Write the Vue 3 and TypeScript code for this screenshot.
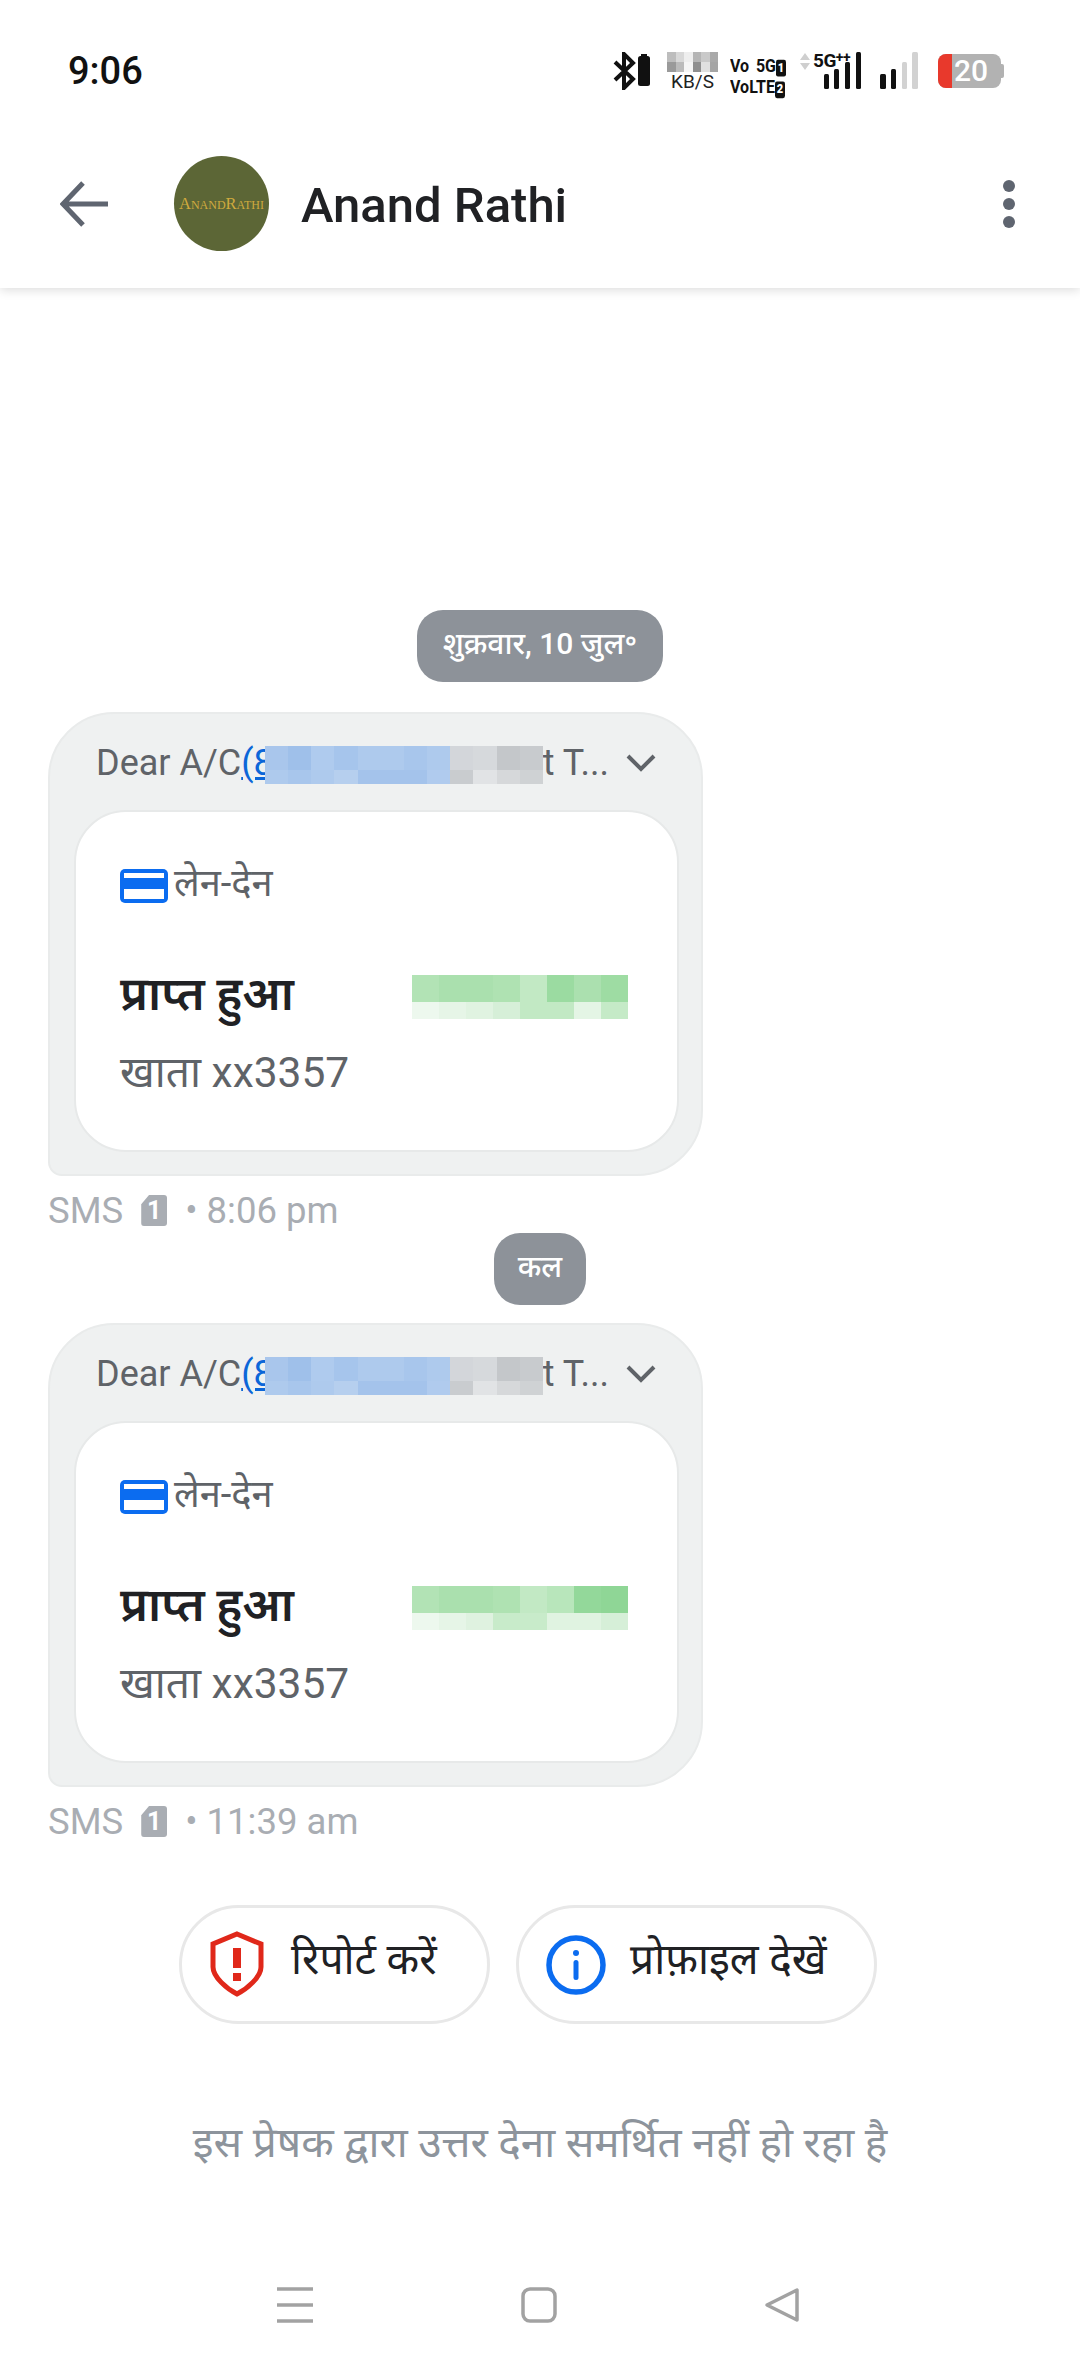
<script setup lang="ts">
interface Msg { time: string; blue: string[]; green: string[]; chip: string }
const topBlue = ['#a9c6ec','#9fc0ea','#afcbee','#a6c5ec','#aecaed','#aecaed','#a8c6ec','#aecaed','#d3d6da','#d6d9dc','#c4c7ca','#c8cbce']
const botBlue = ['#aecaed','#a8c6ec','#aecaed','#b6cfee','#a4c3eb','#a4c3eb','#a4c3eb','#b0cbee','#c9cccf','#e1e3e5','#d6d8da','#cfd2d4']
const green1 = ['#b2e3b5','#aae0ae','#aae0ae','#afe2b2','#c2e9c4','#9bdba1','#abe0af','#9edca3','#edf8ee','#e6f5e7','#e0f3e1','#d6efd8','#c2e9c4','#c2e9c4','#e4f5e5','#c5eac7']
const green2 = ['#b2e3b5','#aae0ae','#aae0ae','#afe2b2','#c2e9c4','#b8e6bb','#93d89a','#8fd696','#edf8ee','#e6f5e7','#dff2e0','#c8ebca','#c8ebca','#e0f3e1','#e0f3e1','#d6efd8']
const messages: Msg[] = [
  { chip: 'शुक्रवार, 10 जुल॰', time: '8:06 pm', blue: [...topBlue, ...botBlue], green: green1 },
  { chip: 'कल', time: '11:39 am', blue: [...topBlue, ...botBlue], green: green2 },
]
const speed = ['#bdbdbd','#d8d8d8','#eeeeee','#b5b5b5','#c9c9c9','#a9a9a9','#9a9a9a','#bbbbbb','#f5f5f5','#8f8f8f','#e0e0e0','#a5a5a5']
</script>

<template>
  <div class="page">
    <div class="status">
      <span class="clock">9:06</span>
      <div class="cluster">
        <svg class="bt" width="39" height="38" viewBox="0 0 39 38">
          <path d="M2 10 L20 27 L11 36 V2 L20 11 L2 28" fill="none" stroke="#111" stroke-width="4" stroke-linejoin="miter"/>
          <rect x="25" y="4" width="12" height="30" rx="2.5" fill="#111"/>
          <rect x="28" y="2" width="6" height="3" fill="#111"/>
        </svg>
        <div class="speed">
          <div class="speed-mosaic"><i v-for="(c, i) in speed" :key="i" :style="{ background: c }"></i></div>
          <span>KB/S</span>
        </div>
        <div class="volte">
          <div class="volte-row gap"><span>Vo</span><span>5G<b>1</b></span></div>
          <div class="volte-row"><span>VoLTE<b>2</b></span></div>
        </div>
        <div class="net">
          <svg width="10" height="17" viewBox="0 0 10 17"><path d="M5 0 L10 7 H0 Z M0 10 H10 L5 17 Z" fill="#cfcfcf"/></svg>
          <span class="fiveg">5G<sup>++</sup></span>
          <svg class="bars" width="38" height="37" viewBox="0 0 38 37">
            <rect x="1" y="22" width="5" height="15" rx="1.5" fill="#111"/>
            <rect x="11" y="17" width="5" height="20" rx="1.5" fill="#111"/>
            <rect x="22" y="10" width="5" height="27" rx="1.5" fill="#111"/>
            <rect x="33" y="0" width="5" height="37" rx="1.5" fill="#111"/>
          </svg>
        </div>
        <svg width="38" height="37" viewBox="0 0 38 37">
          <rect x="0" y="22" width="6" height="15" rx="1.5" fill="#111"/>
          <rect x="11" y="17" width="5" height="20" rx="1.5" fill="#111"/>
          <rect x="22" y="10" width="5" height="27" rx="1.5" fill="#d2d2d2"/>
          <rect x="32" y="0" width="6" height="37" rx="1.5" fill="#d2d2d2"/>
        </svg>
        <div class="battery">
          <div class="batt-body"><div class="batt-red"></div><span>20</span></div>
          <div class="batt-tip"></div>
        </div>
      </div>
    </div>

    <header class="topbar">
      <svg class="back" width="48" height="48" viewBox="0 0 48 48">
        <path d="M23 3 L3 24 L23 45 M3 24 H48" fill="none" stroke="#5f6570" stroke-width="5"/>
      </svg>
      <div class="avatar"><span>AnandRathi</span></div>
      <h1 class="name">Anand Rathi</h1>
      <div class="dots"><i></i><i></i><i></i></div>
    </header>

    <main class="thread">
      <section v-for="m in messages" :key="m.time" class="group">
        <div class="chip-row"><span class="chip">{{ m.chip }}</span></div>
        <article class="bubble">
          <div class="bubble-head">
            <span class="preview">Dear A/C<a>(8</a></span>
            <span class="preview tail">t T...</span>
            <svg class="chev" width="30" height="20" viewBox="0 0 30 20"><path d="M2 3 L15 16 L28 3" fill="none" stroke="#5f6368" stroke-width="4"/></svg>
            <div class="head-mosaic"><i v-for="(c, i) in m.blue" :key="i" :style="{ background: c }"></i></div>
          </div>
          <div class="card">
            <div class="tag">
              <svg width="48" height="34" viewBox="0 0 48 34">
                <rect width="48" height="34" rx="5" fill="#0b6cf0"/>
                <rect x="4" y="4" width="40" height="5" fill="#fff"/>
                <rect x="4" y="20" width="40" height="10" fill="#fff"/>
              </svg>
              <span>लेन-देन</span>
            </div>
            <div class="title-row">
              <span class="title">प्राप्त हुआ</span>
              <div class="amount"><i v-for="(c, i) in m.green" :key="i" :style="{ background: c }"></i></div>
            </div>
            <div class="account">खाता xx3357</div>
          </div>
        </article>
        <div class="meta">
          <span>SMS</span>
          <span class="sim">1</span>
          <span>• {{ m.time }}</span>
        </div>
      </section>

      <div class="actions">
        <button class="pill report">
          <svg width="56" height="66" viewBox="0 0 54 66">
            <path d="M27 3 L51 13 V36 C51 46 37 58 27 63 C17 58 3 46 3 36 V13 Z" fill="none" stroke="#e0281a" stroke-width="5"/>
            <rect x="23" y="17" width="8" height="20" fill="#e0281a"/>
            <rect x="23" y="42" width="8" height="8" fill="#e0281a"/>
          </svg>
          <span>रिपोर्ट करें</span>
        </button>
        <button class="pill profile">
          <svg width="60" height="60" viewBox="0 0 60 60">
            <circle cx="30" cy="30" r="27" fill="none" stroke="#0b6cf0" stroke-width="5.5"/>
            <circle cx="30" cy="18" r="3" fill="#0b6cf0"/>
            <rect x="27.5" y="25" width="5" height="20" rx="2.5" fill="#0b6cf0"/>
          </svg>
          <span>प्रोफ़ाइल देखें</span>
        </button>
      </div>

      <p class="notice">इस प्रेषक द्वारा उत्तर देना समर्थित नहीं हो रहा है</p>
    </main>

    <nav class="navbar">
      <svg width="36" height="36" viewBox="0 0 36 36"><path d="M0 2 H36 M0 18 H36 M0 34 H36" stroke="#a2a2a2" stroke-width="3.5"/></svg>
      <svg width="36" height="36" viewBox="0 0 36 36"><rect x="2" y="2" width="32" height="32" rx="7" fill="none" stroke="#a2a2a2" stroke-width="3.5"/></svg>
      <svg width="36" height="36" viewBox="0 0 36 36"><path d="M33 3 V33 L3 18 Z" fill="none" stroke="#a2a2a2" stroke-width="3.5" stroke-linejoin="round"/></svg>
    </nav>
  </div>
</template>

<style>
html, body { margin: 0; background: #fff; }
</style>

<style scoped>
.page {
  width: 1080px;
  height: 2372px;
  display: flex;
  flex-direction: column;
  background: #fff;
  overflow: hidden;
  font-family: Roboto, "Noto Sans Devanagari", "Noto Sans", sans-serif;
}
.status {
  height: 120px;
  flex: none;
  display: flex;
  justify-content: space-between;
  align-items: flex-start;
  padding: 52px 76px 0 68px;
  box-sizing: border-box;
}
.clock { font-size: 38px; line-height: 38px; font-weight: 500; color: #111; }
.cluster { display: flex; align-items: flex-start; }
.bt { margin-right: 15px; }
.speed { width: 51px; margin-right: 12px; text-align: center; }
.speed-mosaic { display: grid; grid-template-columns: repeat(6, 1fr); grid-auto-rows: 10px; }
.speed span { display: block; font-size: 19px; line-height: 16px; color: #222; margin-top: 2px; }
.volte { width: 56px; margin-right: 14px; margin-top: 3px; font-size: 16px; line-height: 17px; font-weight: 700; color: #111; transform: scaleY(1.2); transform-origin: top; }
.volte-row { display: flex; white-space: nowrap; }
.volte-row.gap { justify-content: space-between; }
.volte b { display: inline-block; background: #111; color: #fff; font-size: 11px; line-height: 14px; width: 10px; text-align: center; border-radius: 2px; }
.net { position: relative; width: 60px; height: 37px; margin-right: 20px; display: flex; }
.net svg:first-child { margin-top: 1px; }
.fiveg { margin-left: 3px; font-size: 19px; line-height: 18px; font-weight: 700; color: #111; letter-spacing: -0.5px; white-space: nowrap; }
.fiveg sup { font-size: 14px; line-height: 0; vertical-align: 5px; }
.bars { position: absolute; left: 23px; top: 0; }
.battery { display: flex; align-items: center; margin-left: 20px; margin-top: 2px; height: 34px; }
.batt-body {
  position: relative;
  width: 63px;
  height: 34px;
  border-radius: 8px;
  background: #b2b2b2;
  overflow: hidden;
  display: flex;
  align-items: center;
  justify-content: flex-end;
}
.batt-red { position: absolute; left: 0; top: 0; bottom: 0; width: 14px; background: #e8392c; }
.batt-body span { font-size: 30px; font-weight: 500; line-height: 34px; color: #fff; margin-right: 13px; }
.batt-tip { width: 3px; height: 14px; background: #b2b2b2; border-radius: 0 2px 2px 0; }

.topbar {
  position: relative;
  height: 168px;
  flex: none;
  display: flex;
  align-items: center;
  padding: 0 65px 0 60px;
  box-sizing: border-box;
  box-shadow: 0 2px 10px rgba(0, 0, 0, 0.14);
  clip-path: inset(0 0 -24px 0);
  background: #fff;
}
.back { margin-right: 66px; }
.avatar {
  width: 95px;
  height: 95px;
  border-radius: 50%;
  background: #5c6636;
  display: flex;
  align-items: center;
  justify-content: center;
  margin: -1px 32px 0 0;
}
.avatar span { font-family: "Liberation Serif", serif; font-size: 16.5px; font-variant: small-caps; color: #d0aa3e; white-space: nowrap; }
.name { margin: 3px 0 0; flex: 1; font-size: 49px; font-weight: 500; color: #202124; line-height: 56px; }
.dots { display: flex; flex-direction: column; gap: 6px; }
.dots i { display: block; width: 12px; height: 12px; border-radius: 50%; background: #5f6570; }

.thread { flex: 1; display: flex; flex-direction: column; padding: 322px 0 0 48px; }
.group { display: flex; flex-direction: column; }
.chip-row { display: flex; justify-content: center; padding-right: 48px; margin-bottom: 30px; }
.group + .group .chip-row { margin-bottom: 18px; }
.group + .group .chip { padding: 0 24px; }
.chip {
  height: 72px;
  padding: 0 26px;
  display: flex;
  align-items: center;
  background: #8d9299;
  border-radius: 26px;
  color: #fff;
  font-size: 30px;
  font-weight: 500;
}
.bubble {
  width: 655px;
  height: 464px;
  box-sizing: border-box;
  background: #eff1f1;
  border: 2px solid #e9ebeb;
  border-radius: 66px 66px 66px 14px;
  padding: 0 22px 22px 24px;
  display: flex;
  flex-direction: column;
}
.bubble-head { position: relative; height: 96px; flex: none; display: flex; align-items: center; padding: 2px 0 0 22px; box-sizing: border-box; }
.preview { font-size: 36px; color: #5f6368; white-space: nowrap; }
.preview a { color: #0b66d8; text-decoration: underline; }
.tail { margin-left: auto; margin-right: 17px; }
.chev { margin-right: 23px; }
.head-mosaic {
  position: absolute;
  left: 191px;
  top: 32px;
  width: 278px;
  height: 38px;
  display: grid;
  grid-template-columns: repeat(12, 1fr);
  grid-template-rows: 24px 14px;
}
.card {
  flex: 1;
  background: #fff;
  border: 2px solid #e7e9e9;
  border-radius: 52px;
  padding: 52px 49px 0 44px;
  display: flex;
  flex-direction: column;
}
.tag { display: flex; align-items: center; gap: 6px; height: 44px; }
.tag span { font-size: 38px; color: #5f6368; }
.title-row { display: flex; align-items: center; justify-content: space-between; margin-top: 61px; height: 56px; }
.title { font-size: 47px; font-weight: 600; color: #202124; }
.amount {
  width: 216px;
  height: 44px;
  display: grid;
  grid-template-columns: repeat(8, 1fr);
  grid-template-rows: 27px 17px;
}
.account { margin-top: 23px; font-size: 42.5px; color: #5f6368; }
.meta { display: flex; align-items: center; gap: 18px; height: 57px; padding-top: 12px; box-sizing: border-box; font-size: 36.5px; color: #a9adb3; }
.sim {
  width: 26px;
  height: 31px;
  background: #a9adb3;
  color: #fff;
  font-size: 25px;
  font-weight: 700;
  line-height: 31px;
  text-align: center;
  border-radius: 3px;
  clip-path: polygon(30% 0, 100% 0, 100% 100%, 0 100%, 0 30%);
}
.actions { display: flex; gap: 26px; margin: 61px 0 0 131px; }
.pill {
  height: 119px;
  box-sizing: border-box;
  background: #fff;
  border: 3px solid #e8e8e8;
  border-radius: 60px;
  display: flex;
  align-items: center;
  font-family: inherit;
  font-size: 42.5px;
  color: #202124;
  padding: 0;
}
.report { width: 311px; padding-left: 27px; gap: 26px; }
.report svg { margin-top: -2px; }
.profile { width: 361px; padding-left: 27px; gap: 24px; }
.pill span { margin-top: -4px; }
.notice { margin: 94px 48px 0 0; text-align: center; font-size: 42.3px; color: #8d949c; }
.navbar {
  height: 104px;
  flex: none;
  display: flex;
  justify-content: space-between;
  align-items: flex-start;
  padding: 19px 280px 0 277px;
  box-sizing: border-box;
}
i { display: block; }
</style>
